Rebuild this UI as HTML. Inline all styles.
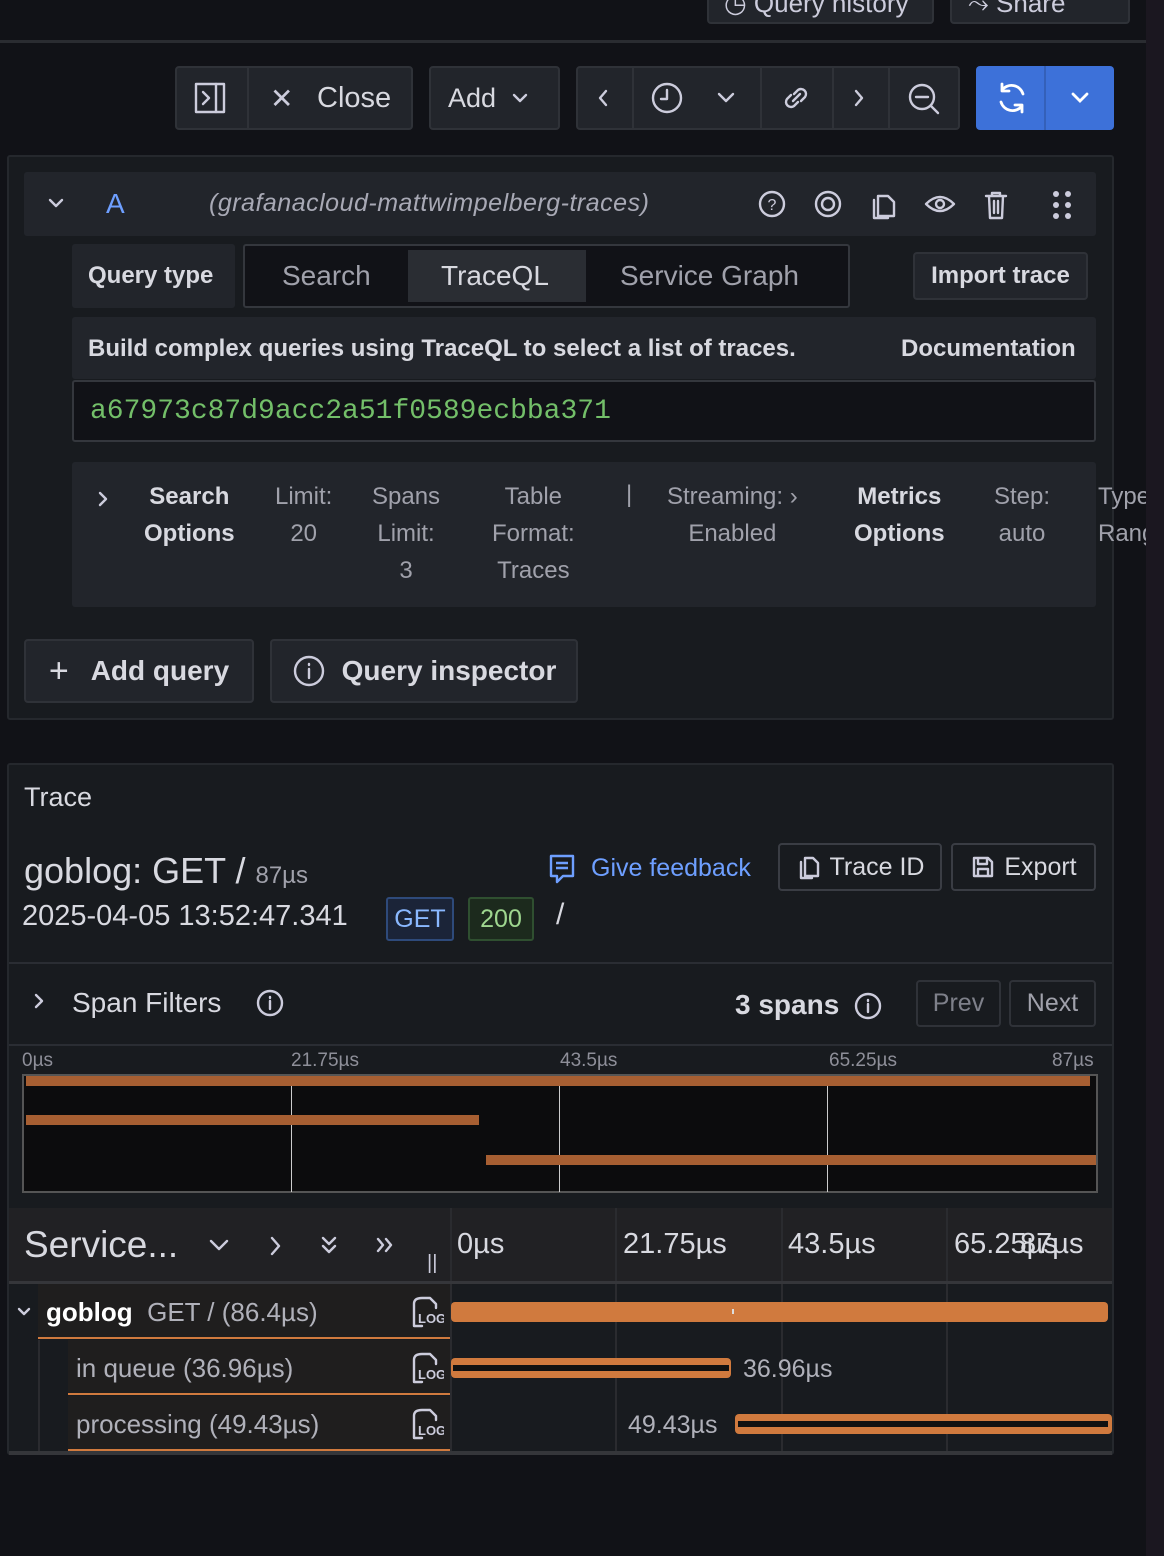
<!DOCTYPE html>
<html><head><meta charset="utf-8"><style>
*{box-sizing:border-box;margin:0;padding:0}
body{width:1164px;height:1556px;background:#111217;font-family:"Liberation Sans",sans-serif;color:#ccccdc;position:relative;overflow:hidden}
.a{position:absolute}
.btn{position:absolute;background:#22252b;border:2px solid #2f3238;border-radius:4px;display:flex;align-items:center;justify-content:center;color:#d8d9e0;font-size:27px}
.t{position:absolute;white-space:nowrap}
svg{display:block}
.ic{stroke:#ccccdc;fill:none;stroke-width:2.4;stroke-linecap:round;stroke-linejoin:round}
</style></head><body>
<div class="a" style="left:0;top:40px;width:1146px;height:3px;background:#2a2c31"></div>
<div class="btn" style="left:707px;top:-12px;width:227px;height:36px"></div>
<div class="t" style="left:724px;top:-12px;font-size:26px">◷ Query history</div>
<div class="btn" style="left:950px;top:-12px;width:180px;height:36px"></div>
<div class="t" style="left:968px;top:-12px;font-size:26px">⤳ Share</div>

<!-- toolbar -->
<div class="btn" style="left:175px;top:66px;width:238px;height:64px;justify-content:flex-start"></div>
<div class="a" style="left:247px;top:68px;width:2px;height:60px;background:#2f3238"></div>
<svg class="a" style="left:194px;top:82px" width="34" height="32"><rect x="2" y="2" width="28" height="28" class="ic"/><line x1="22" y1="2" x2="22" y2="30" class="ic"/><path d="M9 10l6 6-6 6" class="ic"/></svg>
<div class="t" style="left:270px;top:82px;font-size:28px">✕</div>
<div class="t" style="left:317px;top:82px;font-size:29px;color:#d8d9e0">Close</div>
<div class="btn" style="left:429px;top:66px;width:131px;height:64px;justify-content:flex-start;padding-left:17px">Add <svg width="20" height="16" style="margin-left:14px"><path d="M4 5l6 6 6-6" class="ic"/></svg></div>
<div class="btn" style="left:576px;top:66px;width:384px;height:64px"></div>
<div class="a" style="left:632px;top:68px;width:2px;height:60px;background:#2f3238"></div>
<div class="a" style="left:760px;top:68px;width:2px;height:60px;background:#2f3238"></div>
<div class="a" style="left:832px;top:68px;width:2px;height:60px;background:#2f3238"></div>
<div class="a" style="left:888px;top:68px;width:2px;height:60px;background:#2f3238"></div>
<svg class="a" style="left:596px;top:88px" width="16" height="20"><path d="M10 3l-6 7 6 7" class="ic"/></svg>
<svg class="a" style="left:650px;top:81px" width="34" height="34"><circle cx="17" cy="17" r="14" class="ic"/><path d="M17 9v9h-6" class="ic"/></svg>
<svg class="a" style="left:716px;top:90px" width="20" height="16"><path d="M3 4l7 7 7-7" class="ic"/></svg>
<svg class="a" style="left:779px;top:81px" width="34" height="34"><path d="M14 20l7-7M12 14l-4 4a5 5 0 007 7l4-4M22 20l4-4a5 5 0 00-7-7l-4 4" class="ic"/></svg>
<svg class="a" style="left:851px;top:88px" width="16" height="20"><path d="M5 3l6 7-6 7" class="ic"/></svg>
<svg class="a" style="left:906px;top:81px" width="36" height="36"><circle cx="16" cy="16" r="12" class="ic"/><path d="M10 16h12M25 25l7 7" class="ic"/></svg>
<div class="a" style="left:976px;top:66px;width:138px;height:64px;background:#3d71d9;border-radius:4px"></div>
<div class="a" style="left:1044px;top:66px;width:2px;height:64px;background:#3460b9"></div>
<svg class="a" style="left:994px;top:80px" width="36" height="36"><path d="M29 14a12 12 0 00-21-4M7 22a12 12 0 0021 4M8 4v7h7M28 32v-7h-7" stroke="#fff" fill="none" stroke-width="2.8" stroke-linecap="round" stroke-linejoin="round"/></svg>
<svg class="a" style="left:1070px;top:90px" width="20" height="16"><path d="M3 4l7 7 7-7" stroke="#fff" fill="none" stroke-width="2.8" stroke-linecap="round"/></svg>

<!-- query panel -->
<div class="a" style="left:7px;top:155px;width:1107px;height:565px;background:#181b1f;border:2px solid #25282d;border-radius:3px"></div>
<div class="a" style="left:24px;top:172px;width:1072px;height:64px;background:#22252b;border-radius:3px"></div>
<svg class="a" style="left:47px;top:197px" width="18" height="14"><path d="M3 3l6 6 6-6" class="ic" stroke-width="2"/></svg>
<div class="t" style="left:106px;top:188px;font-size:28px;color:#6e9fff">A</div>
<div class="t" style="left:209px;top:189px;font-size:25px;font-style:italic;color:#a8a9b5;letter-spacing:0.5px">(grafanacloud-mattwimpelberg-traces)</div>
<svg class="a" style="left:756px;top:188px" width="330" height="34">
<circle cx="16" cy="16" r="12" class="ic" stroke-width="2"/><text x="16" y="22" font-size="16" fill="#ccccdc" text-anchor="middle" font-family="Liberation Sans">?</text>
<circle cx="72" cy="16" r="12" class="ic" stroke-width="2"/><circle cx="72" cy="16" r="6" class="ic" stroke-width="2"/>
<path d="M122 8h10l6 6v14h-16zM118 12v18h14" class="ic" stroke-width="2"/>
<path d="M170 16q14-14 28 0q-14 14-28 0z" class="ic" stroke-width="2"/><circle cx="184" cy="16" r="4" class="ic" stroke-width="2"/>
<path d="M230 8h20M236 8v-3h8v3M233 8l1 22h12l1-22M238 13v12M242 13v12" class="ic" stroke-width="2"/>
<circle cx="300" cy="6" r="3" fill="#ccccdc"/><circle cx="312" cy="6" r="3" fill="#ccccdc"/><circle cx="300" cy="17" r="3" fill="#ccccdc"/><circle cx="312" cy="17" r="3" fill="#ccccdc"/><circle cx="300" cy="28" r="3" fill="#ccccdc"/><circle cx="312" cy="28" r="3" fill="#ccccdc"/>
</svg>
<div class="a" style="left:72px;top:244px;width:163px;height:64px;background:#22252b;border-radius:3px"></div>
<div class="t" style="left:88px;top:262px;font-size:24px;font-weight:bold;color:#d8d9e0">Query type</div>
<div class="a" style="left:243px;top:244px;width:607px;height:64px;border:2px solid #34373d;border-radius:3px;background:#111217"></div>
<div class="a" style="left:408px;top:250px;width:178px;height:52px;background:#2a2d33"></div>
<div class="t" style="left:282px;top:260px;font-size:28px;color:#a0a1ab">Search</div>
<div class="t" style="left:441px;top:260px;font-size:28px;color:#d8d9e0">TraceQL</div>
<div class="t" style="left:620px;top:260px;font-size:28px;color:#a0a1ab">Service Graph</div>
<div class="btn" style="left:913px;top:252px;width:175px;height:48px;font-size:24px;font-weight:bold">Import trace</div>
<div class="a" style="left:72px;top:317px;width:1024px;height:62px;background:#22252b;border-radius:3px"></div>
<div class="t" style="left:88px;top:335px;font-size:24px;font-weight:bold;color:#d8d9e0">Build complex queries using TraceQL to select a list of traces.</div>
<div class="t" style="left:901px;top:335px;font-size:24px;font-weight:bold;color:#d8d9e0">Documentation</div>
<div class="a" style="left:72px;top:380px;width:1024px;height:62px;background:#111217;border:2px solid #34373d;border-radius:3px"></div>
<div class="t" style="left:90px;top:396px;font-size:28px;font-family:'Liberation Mono',monospace;color:#73bf69">a67973c87d9acc2a51f0589ecbba371</div>
<div class="a" style="left:72px;top:462px;width:1024px;height:145px;background:#22252b;border-radius:3px"></div>
<div class="a" style="left:72px;top:462px;width:1074px;height:145px;overflow:hidden;font-size:24px;line-height:37px;color:#a0a1ab">
<svg class="a" style="left:24px;top:28px" width="14" height="18"><path d="M4 3l6 6-6 6" class="ic" stroke-width="2.2"/></svg>
<div class="t" style="left:72px;top:16px;text-align:center;font-weight:bold;color:#d8d9e0">Search<br>Options</div>
<div class="t" style="left:203px;top:16px;text-align:center">Limit:<br>20</div>
<div class="t" style="left:300px;top:16px;text-align:center">Spans<br>Limit:<br>3</div>
<div class="t" style="left:420px;top:16px;text-align:center">Table<br>Format:<br>Traces</div>
<div class="t" style="left:554px;top:14px">|</div>
<div class="t" style="left:595px;top:16px;text-align:center">Streaming: ›<br>Enabled</div>
<div class="t" style="left:782px;top:16px;text-align:center;font-weight:bold;color:#d8d9e0">Metrics<br>Options</div>
<div class="t" style="left:922px;top:16px;text-align:center">Step:<br>auto</div>
<div class="t" style="left:1026px;top:16px">Type<br>Rang</div>
</div>
<div class="btn" style="left:24px;top:639px;width:230px;height:64px;font-weight:bold;font-size:28px"><span style="font-weight:normal;font-size:34px;margin-right:22px">+</span>Add query</div>
<div class="btn" style="left:270px;top:639px;width:308px;height:64px;font-weight:bold;font-size:28px"><svg width="34" height="34" style="margin-right:16px"><circle cx="17" cy="17" r="14" class="ic" stroke-width="2.2"/><path d="M17 15v9M17 10v1" class="ic" stroke-width="2.4"/></svg>Query inspector</div>

<!-- trace panel -->
<div class="a" style="left:7px;top:763px;width:1107px;height:692px;background:#181b1f;border:2px solid #25282d;border-radius:3px"></div>
<div class="t" style="left:24px;top:782px;font-size:27px;color:#d8d9e0">Trace</div>
<div class="t" style="left:24px;top:850px;font-size:36px;color:#d8d9e0">goblog: GET / <span style="font-size:24px;color:#a0a1ab">87µs</span></div>
<div class="t" style="left:22px;top:900px;font-size:29px;color:#d8d9e0">2025-04-05 13:52:47.341</div>
<div class="a" style="left:386px;top:897px;width:68px;height:44px;background:#1b2438;border:2px solid #2e4a7a;border-radius:3px;color:#8ab8ff;font-size:25px;text-align:center;line-height:40px">GET</div>
<div class="a" style="left:468px;top:897px;width:66px;height:44px;background:#1c2a1d;border:2px solid #2f4f30;border-radius:3px;color:#9ed68f;font-size:25px;text-align:center;line-height:40px">200</div>
<div class="t" style="left:556px;top:898px;font-size:30px;color:#d8d9e0">/</div>
<svg class="a" style="left:548px;top:853px" width="30" height="32"><path d="M3 3h22v20h-10l-6 6v-6h-6zM8 10h12M8 15h12" stroke="#6e9fff" fill="none" stroke-width="2.4" stroke-linejoin="round"/></svg>
<div class="t" style="left:591px;top:854px;font-size:25px;color:#6e9fff">Give feedback</div>
<div class="btn" style="left:778px;top:843px;width:164px;height:48px;font-size:25px;background:#181b1f;border-color:#3a3d44"><svg width="26" height="26" style="margin-right:8px"><path d="M9 4h8l5 5v13h-13zM5 8v16h11" class="ic" stroke-width="2"/></svg>Trace ID</div>
<div class="btn" style="left:951px;top:843px;width:145px;height:48px;font-size:25px;background:#181b1f;border-color:#3a3d44"><svg width="26" height="26" style="margin-right:8px"><path d="M4 4h14l4 4v14h-18zM8 4v6h9v-6M8 22v-7h10v7" class="ic" stroke-width="2"/></svg>Export</div>
<div class="a" style="left:9px;top:962px;width:1103px;height:2px;background:#2a2d33"></div>
<svg class="a" style="left:32px;top:992px" width="14" height="18"><path d="M4 3l6 6-6 6" class="ic" stroke-width="2.2"/></svg>
<div class="t" style="left:72px;top:987px;font-size:28px;color:#d8d9e0">Span Filters</div>
<svg class="a" style="left:256px;top:989px" width="28" height="28"><circle cx="14" cy="14" r="12" class="ic" stroke-width="2"/><path d="M14 12v8M14 8v1" class="ic" stroke-width="2.2"/></svg>
<div class="t" style="left:735px;top:989px;font-size:28px;font-weight:bold;color:#d8d9e0">3 spans</div>
<svg class="a" style="left:854px;top:992px" width="28" height="28"><circle cx="14" cy="14" r="12" class="ic" stroke-width="2"/><path d="M14 12v8M14 8v1" class="ic" stroke-width="2.2"/></svg>
<div class="btn" style="left:916px;top:980px;width:85px;height:47px;background:#181b1f;color:#7e808a;font-size:25px">Prev</div>
<div class="btn" style="left:1009px;top:980px;width:87px;height:47px;background:#181b1f;color:#a0a1ab;font-size:25px">Next</div>
<div class="a" style="left:9px;top:1044px;width:1103px;height:2px;background:#2a2d33"></div>
<div class="t" style="left:22px;top:1050px;font-size:19px;color:#8e8f99">0µs</div>
<div class="t" style="left:291px;top:1050px;font-size:19px;color:#8e8f99">21.75µs</div>
<div class="t" style="left:560px;top:1050px;font-size:19px;color:#8e8f99">43.5µs</div>
<div class="t" style="left:829px;top:1050px;font-size:19px;color:#8e8f99">65.25µs</div>
<div class="t" style="left:1052px;top:1050px;font-size:19px;color:#8e8f99">87µs</div>
<div class="a" style="left:22px;top:1074px;width:1076px;height:119px;background:#0c0c0d;border:2px solid #555"></div>
<div class="a" style="left:291px;top:1076px;width:1px;height:116px;background:#ccc"></div>
<div class="a" style="left:559px;top:1076px;width:1px;height:116px;background:#ccc"></div>
<div class="a" style="left:827px;top:1076px;width:1px;height:116px;background:#ccc"></div>
<div class="a" style="left:26px;top:1076px;width:1064px;height:10px;background:#a75f32"></div>
<div class="a" style="left:26px;top:1115px;width:453px;height:10px;background:#a75f32"></div>
<div class="a" style="left:486px;top:1155px;width:610px;height:10px;background:#a75f32"></div>

<!-- table header -->
<div class="a" style="left:9px;top:1208px;width:1103px;height:74px;background:#212124"></div>
<div class="t" style="left:24px;top:1224px;font-size:37px;color:#d8d9e0">Service...</div>
<svg class="a" style="left:208px;top:1236px" width="200" height="20"><path d="M3 5l8 8 8-8M64 2l7 8-7 8M115 2l6 6 6-6M115 10l6 6 6-6M170 3l5 6-5 6M178 3l5 6-5 6" class="ic" stroke-width="2.6"/></svg>
<div class="t" style="left:427px;top:1252px;font-size:20px">||</div>
<div class="a" style="left:450px;top:1208px;width:2px;height:245px;background:#2a2b2f"></div>
<div class="a" style="left:615px;top:1208px;width:2px;height:245px;background:#2a2b2f"></div>
<div class="a" style="left:781px;top:1208px;width:2px;height:245px;background:#2a2b2f"></div>
<div class="a" style="left:946px;top:1208px;width:2px;height:245px;background:#2a2b2f"></div>
<div class="t" style="left:457px;top:1228px;font-size:29px;color:#d8d9e0">0µs</div>
<div class="t" style="left:623px;top:1228px;font-size:29px;color:#d8d9e0">21.75µs</div>
<div class="t" style="left:788px;top:1228px;font-size:29px;color:#d8d9e0">43.5µs</div>
<div class="t" style="left:954px;top:1228px;font-size:29px;color:#d8d9e0">65.25µs</div>
<div class="t" style="left:1020px;top:1228px;font-size:29px;color:#d8d9e0">87µs</div>
<div class="a" style="left:9px;top:1281px;width:1103px;height:3px;background:#35363a"></div>
<!-- rows -->
<div class="a" style="left:38px;top:1284px;width:412px;height:54px;background:#1f1e1e"></div>
<div class="a" style="left:38px;top:1337px;width:412px;height:2px;background:#d07a3e"></div>
<div class="a" style="left:68px;top:1340px;width:382px;height:54px;background:#1f1e1e"></div>
<div class="a" style="left:68px;top:1393px;width:382px;height:2px;background:#d07a3e"></div>
<div class="a" style="left:68px;top:1396px;width:382px;height:54px;background:#1f1e1e"></div>
<div class="a" style="left:68px;top:1449px;width:382px;height:2px;background:#d07a3e"></div>
<div class="a" style="left:38px;top:1340px;width:2px;height:112px;background:#2a2b2f"></div>
<div class="a" style="left:9px;top:1451px;width:1103px;height:4px;background:#35363a"></div>
<svg class="a" style="left:16px;top:1305px" width="16" height="14"><path d="M3 4l5 5 5-5" class="ic" stroke-width="2"/></svg>
<div class="t" style="left:46px;top:1297px;font-size:26px"><b style="color:#fff">goblog</b>&nbsp; <span style="color:#b0b1ba">GET / (86.4µs)</span></div>
<div class="t" style="left:76px;top:1353px;font-size:26px;color:#b0b1ba">in queue (36.96µs)</div>
<div class="t" style="left:76px;top:1409px;font-size:26px;color:#b0b1ba">processing (49.43µs)</div>
<svg class="a" style="left:410px;top:1296px" width="34" height="34"><path d="M12 2h8l6 6v4M4 8v22h8M12 2q-8 0-8 6" class="ic" stroke-width="2"/><text x="8" y="27" font-size="13" font-weight="bold" fill="#ccccdc" font-family="Liberation Sans">LOG</text></svg>
<svg class="a" style="left:410px;top:1352px" width="34" height="34"><path d="M12 2h8l6 6v4M4 8v22h8M12 2q-8 0-8 6" class="ic" stroke-width="2"/><text x="8" y="27" font-size="13" font-weight="bold" fill="#ccccdc" font-family="Liberation Sans">LOG</text></svg>
<svg class="a" style="left:410px;top:1408px" width="34" height="34"><path d="M12 2h8l6 6v4M4 8v22h8M12 2q-8 0-8 6" class="ic" stroke-width="2"/><text x="8" y="27" font-size="13" font-weight="bold" fill="#ccccdc" font-family="Liberation Sans">LOG</text></svg>
<div class="a" style="left:451px;top:1302px;width:657px;height:20px;background:#d07a3e;border-radius:4px"></div>
<div class="a" style="left:732px;top:1309px;width:2px;height:5px;background:#ddd"></div>
<div class="a" style="left:451px;top:1358px;width:280px;height:20px;background:#d07a3e;border-radius:4px"></div>
<div class="a" style="left:453px;top:1365px;width:276px;height:6px;background:#111"></div>
<div class="t" style="left:743px;top:1355px;font-size:25px;color:#b0b1ba">36.96µs</div>
<div class="t" style="left:628px;top:1411px;font-size:25px;color:#b0b1ba">49.43µs</div>
<div class="a" style="left:735px;top:1414px;width:377px;height:20px;background:#d07a3e;border-radius:4px"></div>
<div class="a" style="left:738px;top:1421px;width:370px;height:6px;background:#111"></div>
<div class="a" style="left:1146px;top:0;width:18px;height:1556px;background:#1b1720"></div>
</body></html>
